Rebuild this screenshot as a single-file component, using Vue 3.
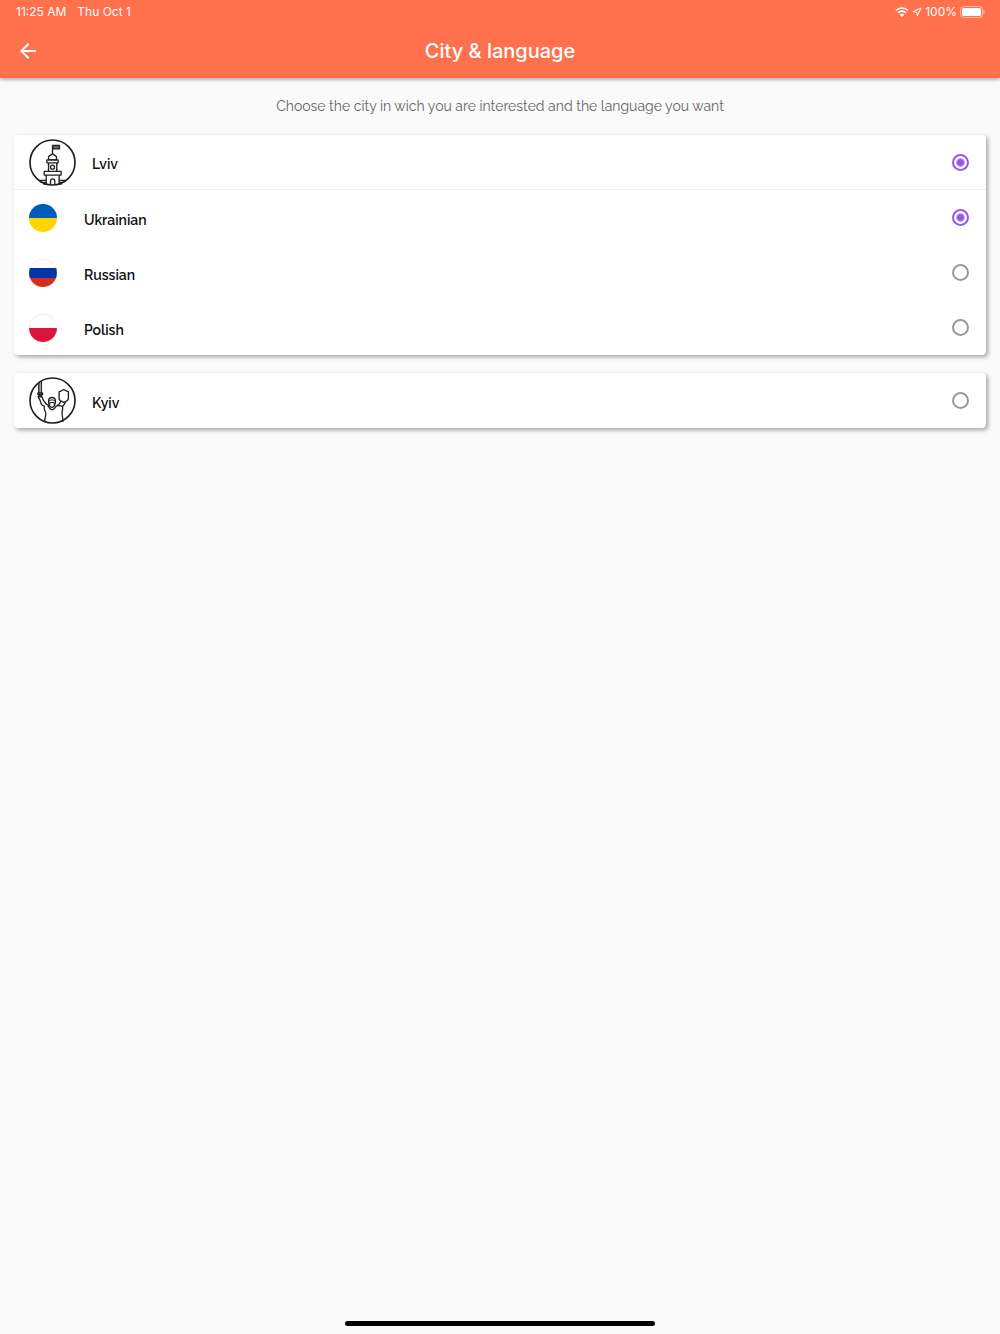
<template>
  <div class="page">
    <header class="header">
      <div class="status">
        <span class="status-time">11:25 AM</span>
        <span>Thu Oct 1</span>
        <div class="status-right">
          <svg class="wifi" viewBox="0 0 28 20" aria-hidden="true">
            <path d="M14 20l-4.500-4.600a6.500 6.500 0 0 1 9 0z" fill="#fff" />
            <path d="M6.200 11.600a11.200 11.200 0 0 1 15.600 0M1.800 7a17.500 17.500 0 0 1 24.400 0" fill="none" stroke="#fff" stroke-width="3.400" />
          </svg>
          <svg class="location" viewBox="0 0 20 20" aria-hidden="true">
            <path d="M18 2L2 9.500l7.700 0.800L10.700 18z" fill="none" stroke="#fff" stroke-width="2" stroke-linejoin="round" />
          </svg>
          <span>100%</span>
          <svg class="battery" viewBox="0 0 50 24" aria-hidden="true">
            <rect x="1" y="1" width="44" height="22" rx="6" fill="none" stroke="#fff" stroke-opacity="0.5" stroke-width="2" />
            <rect x="4" y="4" width="38" height="16" rx="3" fill="#fff" />
            <path d="M47 8c3 1.500 3 6.500 0 8z" fill="#fff" fill-opacity="0.6" />
          </svg>
        </div>
      </div>
      <div class="toolbar">
        <button class="back" type="button" aria-label="Back">
          <svg viewBox="0 0 24 24" aria-hidden="true">
            <path d="M20 11H7.830l5.590-5.590L12 4l-8 8 8 8 1.410-1.410L7.830 13H20z" fill="#fff" />
          </svg>
        </button>
        <h1 class="title">City &amp; language</h1>
      </div>
    </header>

    <main class="content">
      <p class="hint">Choose the city in wich you are interested and the language you want</p>

      <section v-for="item in cities" :key="item.id" class="card">
        <label class="row city-row">
          <svg class="city-icon" viewBox="0 0 142 142" fill="none" stroke="#231f20" stroke-width="4" stroke-linejoin="round" aria-hidden="true">
            <g v-if="item.id === 'lviv'">
              <path d="M71 18v28" />
              <path d="M72 19h20v11H72z" fill="#666" />
              <path d="M59 54c3-5 8-5 12-10 4 5 9 5 12 10v9H59z" />
              <path d="M54 63h34v9H54zM59 72v26M84 72v26M46 98h51v11H46zM52 109v29M91 109v29" />
              <circle cx="71" cy="85" r="6" />
              <path d="M65 138v-11c0-9 13-9 13 0v11M59 76v3M84 76v3M59 91v3M84 91v3" />
              <path d="M29 125h23M91 125h22M35 131h17M91 131h16M43 136h9M91 136h8" />
            </g>
            <g v-else>
              <path d="M29 17v31M33 14v34M38 11v37" stroke-width="3" />
              <path d="M27 48h14v5H27zM31 53h7v7h-7z" fill="#555" />
              <path d="M29 56c-3 4 0 8 3 11l6 16 9 6M39 60l4 10 10 13 9 4" />
              <path d="M47 89c-6 9 5 13 4 23-1 8-5 15-3 24" />
              <path d="M62 87c-1-5-3-8-3-13 0-16 21-16 21 0 0 5-2 8-3 13-4 6-11 6-15 0z" />
              <path d="M60 73c4-5 15-5 19 0M63 75v11M76 75v11M64 77h11" stroke-width="3" />
              <path d="M57 87c3 7 7 10 13 12 6-2 10-5 13-12" />
              <path d="M91 44c8 0 10-5 14-6 4 1 6 5 14 6v22c0 6-8 8-14 11-6-3-14-5-14-11z" />
              <path d="M96 73c-3 7-4 12-13 14M110 75c-1 7-5 10-9 14M101 87c3 9-2 15-1 24 0 9 4 16 2 25" />
              <path d="M83 87c7-1 12-1 18 2" />
            </g>
            <circle cx="71" cy="71" r="68" stroke-width="5" />
          </svg>
          <span class="name">{{ item.name }}</span>
          <input v-model="city" class="radio" type="radio" name="city" :value="item.id" />
        </label>

        <template v-if="city === item.id">
          <label v-for="lang in item.languages" :key="lang.id" class="row">
            <span class="flag" :class="lang.id"></span>
            <span class="name">{{ lang.name }}</span>
            <input v-model="language" class="radio" type="radio" name="language" :value="lang.id" />
          </label>
        </template>
      </section>
    </main>

    <div class="home-bar"></div>
  </div>
</template>

<script setup>
import { ref } from "vue";

const languages = [
  { id: "ukrainian", name: "Ukrainian" },
  { id: "russian", name: "Russian" },
  { id: "polish", name: "Polish" },
];

const cities = [
  { id: "lviv", name: "Lviv", languages },
  { id: "kyiv", name: "Kyiv", languages },
];

const city = ref("lviv");
const language = ref("ukrainian");
</script>

<style>
body {
  background: #fafafa;
}
</style>

<style scoped>
.page {
  display: flex;
  flex-direction: column;
  min-height: 100vh;
  font-family: Raleway, "Open Sans", sans-serif;
  color: #111;
}

.header {
  color: #fff;
  background: #ff714d;
  box-shadow: 0 1px 4px rgba(0, 0, 0, 0.4);
  font-family: Inter, sans-serif;
}

.status {
  display: flex;
  align-items: center;
  gap: 11px;
  height: 23px;
  padding: 0 15px 1px 16px;
  font-size: 12px;
}

.status-right {
  display: flex;
  align-items: center;
  gap: 3px;
  margin-left: auto;
}

.wifi {
  width: 14px;
  height: 10px;
}

.location {
  width: 10px;
  height: 10px;
}

.battery {
  width: 25px;
  height: 12px;
}

.toolbar {
  display: grid;
  grid-template-columns: 40px 1fr 40px;
  align-items: center;
  height: 54px;
  padding: 0 8px;
}

.back {
  display: flex;
  align-items: center;
  justify-content: center;
  height: 40px;
  padding: 0;
  border: none;
  background: none;
  cursor: pointer;
}

.back svg {
  width: 24px;
  height: 24px;
}

.title {
  margin: 0;
  font-size: 20px;
  font-weight: 500;
  line-height: 24px;
  text-align: center;
}

.content {
  display: flex;
  flex-direction: column;
  gap: 18px;
  padding: 18px 14px;
}

.hint {
  margin: 0;
  color: #666;
  font-size: 14px;
  font-weight: 400;
  line-height: 21px;
  text-align: center;
}

.card {
  border-radius: 4px;
  background: #fff;
  box-shadow: 2px 2px 4px rgba(0, 0, 0, 0.35);
}

.row {
  display: flex;
  align-items: center;
  gap: 27px;
  box-sizing: border-box;
  height: 55px;
  padding: 0 17px 0 15px;
  cursor: pointer;
}

.city-row {
  gap: 16px;
}

.city-row:not(:last-child) {
  border-bottom: 1px solid #eee;
}

.city-icon {
  width: 47px;
  height: 47px;
}

.name {
  flex: 1;
  padding-top: 4px;
  font-size: 14px;
  font-weight: 600;
  line-height: 20px;
}

.flag {
  box-sizing: border-box;
  width: 28px;
  height: 28px;
  border-radius: 50%;
}

.ukrainian {
  background: linear-gradient(#005bbb 50%, #ffd500 50%);
}

.russian {
  background: linear-gradient(#fff 33%, #0036a7 33%, #0036a7 67%, #d62b1f 67%);
  box-shadow: inset 0 0 0 1px rgba(255, 113, 77, 0.15);
}

.polish {
  background: linear-gradient(#fff 50%, #dc143c 50%);
  box-shadow: inset 0 0 0 1px rgba(255, 113, 77, 0.15);
}

.radio {
  appearance: none;
  box-sizing: border-box;
  width: 17px;
  height: 17px;
  margin: 0;
  border: 2px solid #999;
  border-radius: 50%;
  cursor: pointer;
}

.radio:checked {
  border-color: #9558ed;
  background: radial-gradient(circle, #9558ed 3px, transparent 5px);
}

.home-bar {
  width: 31%;
  height: 5px;
  margin: auto auto 8px;
  border-radius: 3px;
  background: #000;
}
</style>
